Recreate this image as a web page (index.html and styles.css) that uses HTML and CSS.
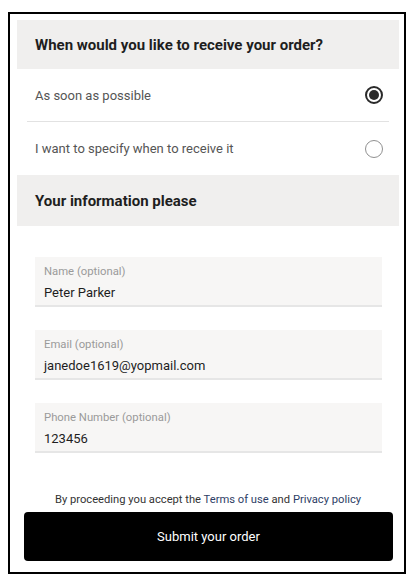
FILE: index.html
```html
<!DOCTYPE html>
<html lang="en">
<head>
  <meta charset="UTF-8">
  <meta name="viewport" content="width=device-width, initial-scale=1.0">
  <title>Checkout</title>
  <link rel="stylesheet" href="styles.css">
</head>
<body>
  <div class="card">
    <h2 class="section-title">When would you like to receive your order?</h2>
    <div class="options">
      <label class="option">
        <span>As soon as possible</span>
        <span class="radio checked"></span>
      </label>
      <label class="option">
        <span>I want to specify when to receive it</span>
        <span class="radio"></span>
      </label>
    </div>
    <h2 class="section-title second">Your information please</h2>

    <div class="fields">
      <div class="field">
        <span class="field-label">Name (optional)</span>
        <span class="field-value">Peter Parker</span>
      </div>
      <div class="field">
        <span class="field-label">Email (optional)</span>
        <span class="field-value">janedoe1619@yopmail.com</span>
      </div>
      <div class="field">
        <span class="field-label">Phone Number (optional)</span>
        <span class="field-value">123456</span>
      </div>
    </div>

    <p class="terms">By proceeding you accept the <a href="#">Terms of use</a> and <a href="#">Privacy policy</a></p>
    <button class="submit">Submit your order</button>
  </div>
</body>
</html>
```

FILE: styles.css
```css
body {
  margin: 0;
  font-family: Roboto, "Liberation Sans", sans-serif;
  background: #fff;
  color: #222;
}
.card {
  box-sizing: border-box;
  width: 398px;
  height: 562px;
  margin: 12px 0 0 8px;
  border: 2px solid #000;
  padding: 6px 5px 0 7px;
}
.section-title {
  margin: 0;
  height: 49px;
  display: flex;
  align-items: center;
  padding-left: 18px;
  background: #f0efee;
  font-size: 15px;
  font-weight: 700;
  color: #1e1e1e;
}
.section-title.second {
  height: 51px;
}
.options {
  padding: 0 10px;
}
.option {
  display: flex;
  justify-content: space-between;
  align-items: center;
  height: 52px;
  padding: 0 6px 0 8px;
  font-size: 13px;
  color: #555;
}
.option + .option {
  border-top: 1px solid #e2e2e2;
  height: 53px;
}
.radio {
  box-sizing: border-box;
  width: 18px;
  height: 18px;
  border-radius: 50%;
  border: 1.5px solid #909090;
  position: relative;
}
.radio.checked {
  border: 2px solid #2a2a2a;
}
.radio.checked::after {
  content: "";
  position: absolute;
  top: 2px;
  left: 2px;
  width: 10px;
  height: 10px;
  border-radius: 50%;
  background: #2a2a2a;
}
.fields {
  padding: 31px 17px 0 18px;
  display: flex;
  flex-direction: column;
  gap: 23px;
}
.field {
  height: 50px;
  box-sizing: border-box;
  background: #f7f6f5;
  border-bottom: 2px solid #e6e6e6;
  padding: 7px 9px 0;
  display: flex;
  flex-direction: column;
}
.field-label {
  font-size: 11.3px;
  color: #9a9a9a;
  line-height: 16px;
}
.field-value {
  font-size: 13px;
  color: #1e1e1e;
  line-height: 20px;
  margin-top: 3px;
}
.terms {
  margin: 40px 0 0;
  text-align: center;
  font-size: 11.2px;
  color: #333;
}
.terms a {
  color: #2e3e66;
  text-decoration: none;
}
.submit {
  display: block;
  width: 369px;
  height: 49px;
  margin: 6px 0 0 7px;
  background: #000;
  color: #fff;
  border: none;
  border-radius: 4px;
  font-family: inherit;
  font-size: 13px;
}
```
